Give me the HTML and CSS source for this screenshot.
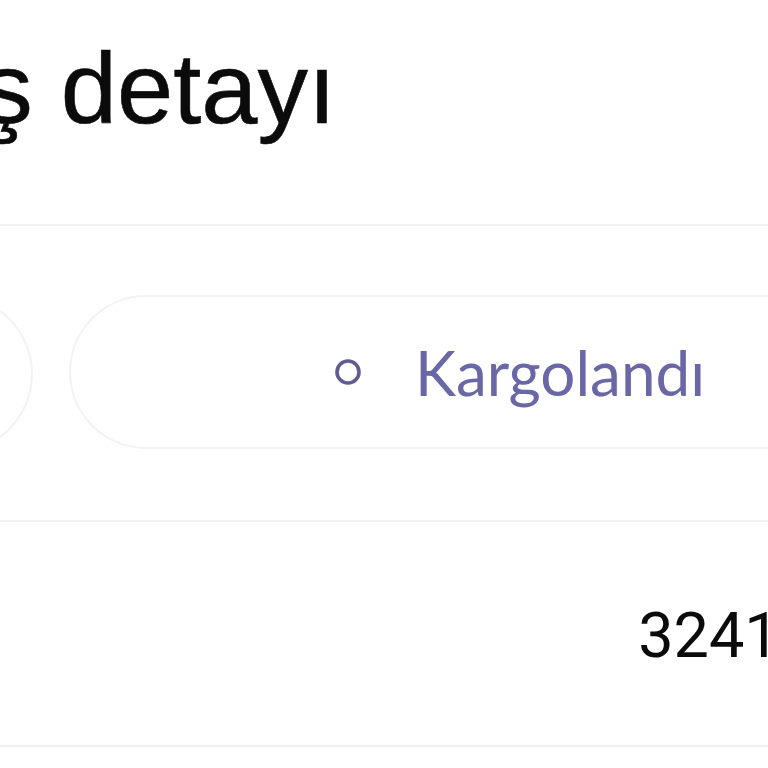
FILE: index.html
```html
<!DOCTYPE html>
<html lang="tr">
<head>
<meta charset="utf-8">
<link rel="stylesheet" href="styles.css">
</head>
<body>
<div class="page">
  <header class="header">
    <h1 class="title"><span>Sipariş detayı</span></h1>
  </header>
  <section class="status">
    <div class="pills">
      <div class="pill pill-prev"></div>
      <div class="pill pill-current">
        <svg class="dot" width="30" height="30" viewBox="0 0 30 30"><circle cx="15" cy="15" r="11" fill="none" stroke="#5f5d8e" stroke-width="3.6"/></svg>
        <span class="pill-label">Kargolandı</span>
      </div>
    </div>
  </section>
  <section class="row">
    <span class="row-value">3241586</span>
  </section>
</div>
</body>
</html>
```
FILE: styles.css
```css
html, body {
  margin: 0;
  padding: 0;
  background: #ffffff;
}
body {
  width: 768px;
  height: 768px;
  overflow: hidden;
}
.page {
  display: flex;
  flex-direction: column;
}
.header {
  height: 224px;
  border-bottom: 2px solid #f1f1f1;
  display: flex;
}
.title {
  margin: 0;
  width: 336px;
  display: flex;
  justify-content: flex-end;
  white-space: nowrap;
  font-family: "Liberation Sans", Arial, sans-serif;
  font-weight: 400;
  font-size: 101px;
  line-height: 1;
  color: #0b0b0b;
  padding-top: 38px;
  -webkit-text-stroke: 0.6px #0b0b0b;
}
.status {
  height: 294px;
  border-bottom: 2px solid #f1f1f1;
  display: flex;
  align-items: center;
}
.pills {
  display: flex;
  gap: 36px;
  margin-left: -865px;
  margin-top: 1px;
}
.pill {
  flex: none;
  width: 894px;
  height: 154px;
  border: 2px solid #f2f2f4;
  border-radius: 80px;
  display: flex;
  align-items: center;
  justify-content: center;
  font-family: Lato, "Noto Sans", sans-serif;
  font-size: 62px;
  color: #6a67a6;
}
.pill-current {
  justify-content: flex-start;
  gap: 52px;
  padding-left: 262px;
  box-sizing: border-box;
}
.dot {
  flex: none;
  margin-top: 1px;
}
.row {
  height: 223px;
  border-bottom: 2px solid #f1f1f1;
  display: flex;
  align-items: center;
  justify-content: flex-end;
  white-space: nowrap;
  font-family: Roboto, "Noto Sans", sans-serif;
  font-size: 63px;
  color: #0b0b0b;
}
.row-value {
  margin-right: -118px;
  padding-top: 4px;
}
```
